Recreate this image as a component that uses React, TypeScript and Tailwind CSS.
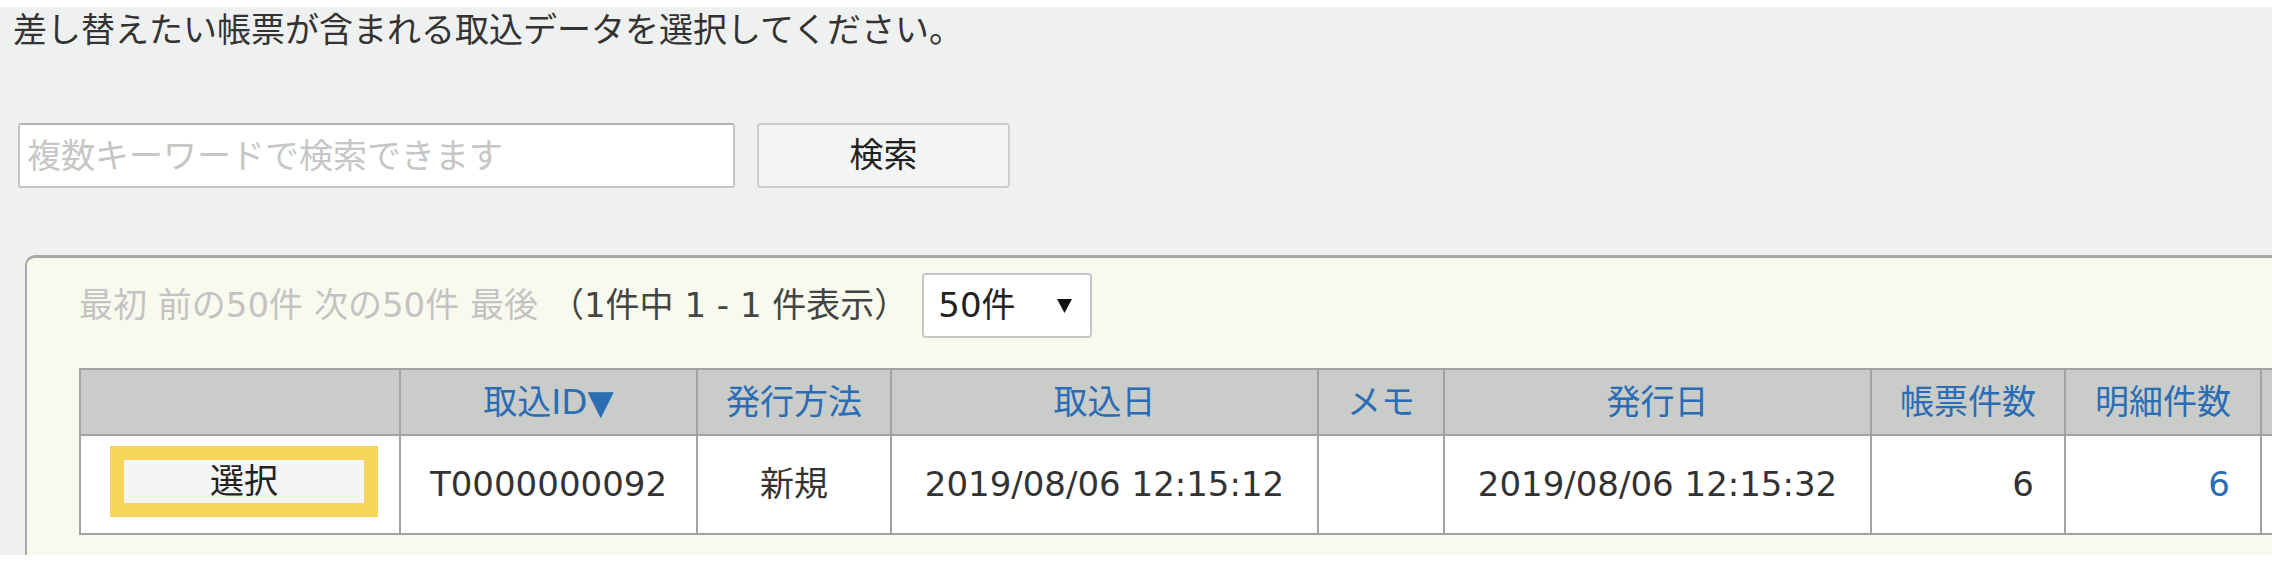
const font = { fontFamily: '"DejaVu Sans", "Noto Sans CJK JP", sans-serif' };

const headers = ['', '取込ID▼', '発行方法', '取込日', 'メモ', '発行日', '帳票件数', '明細件数', ''];

function SelectButton() {
  return (
    <div className="border-[14px] border-[#f7d45a] -mt-[6px] ml-[8px]">
      <div className="w-[240px] h-[43px] bg-[#f4f6f6] flex items-center justify-center text-[#222]">選択</div>
    </div>
  );
}

export default function App() {
  return (
    <div className="w-screen h-[567px] bg-white overflow-hidden text-[34px]" style={font}>
      <div className="mt-[7px] h-[548px] bg-[#eff1f0] overflow-hidden">
        <h1 className="pl-[13px] h-[46px] leading-[46px] text-[34px] font-normal text-[#333] whitespace-nowrap">
          差し替えたい帳票が含まれる取込データを選択してください。
        </h1>

        <div className="mt-[70px] ml-[18px] flex gap-[22px]">
          <input
            className="w-[717px] h-[65px] bg-white border-2 border-[#c4c4c4] border-t-[#b3b3b3] rounded-[3px] px-[7px] text-[34px] text-[#333] placeholder:text-[#c6c6c6] outline-none"
            placeholder="複数キーワードで検索できます"
          />
          <button className="w-[253px] h-[65px] bg-[#f3f4f4] border-2 border-[#cdcdcd] rounded-[4px] text-[#222] text-[34px]">
            検索
          </button>
        </div>

        <div className="mt-[67px] ml-[25px] w-[2400px] h-[400px] bg-[#f9faee] border-t-[3px] border-l-2 border-[#a9a9a9] rounded-tl-[10px] pl-[52px] pt-[15px]">
          <div className="flex items-center h-[65px] whitespace-nowrap">
            <span className="text-[#c3c3c3]">最初 前の50件 次の50件 最後</span>
            <span className="ml-[12px] text-[#444]">（1件中 1 - 1 件表示）</span>
            <div className="ml-[14px] w-[170px] h-[65px] bg-white border-2 border-[#c6c6c6] rounded-[4px] flex items-center pl-[14px] pr-[18px] text-[#222]">
              <span>50件</span>
              <svg className="ml-auto" width="15" height="14" viewBox="0 0 15 14">
                <polygon points="0,0 15,0 7.5,14" fill="#111" />
              </svg>
            </div>
          </div>

          <div className="mt-[30px] inline-grid grid-cols-[318px_295px_192px_425px_124px_425px_192px_194px_200px] grid-rows-[64px_97px] gap-[2px] bg-[#a3a3a3] border-2 border-[#a3a3a3]">
            {headers.map((h, i) => (
              <div key={i} className="bg-[#c9ccc8] flex items-center justify-center text-[#2a6db5] whitespace-nowrap">
                {h}
              </div>
            ))}
            <div className="bg-white flex items-center justify-center">
              <SelectButton />
            </div>
            <div className="bg-white flex items-center justify-center text-[#333]">T0000000092</div>
            <div className="bg-white flex items-center justify-center text-[#333]">新規</div>
            <div className="bg-white flex items-center justify-center text-[#333] whitespace-nowrap">2019/08/06 12:15:12</div>
            <div className="bg-white" />
            <div className="bg-white flex items-center justify-center text-[#333] whitespace-nowrap">2019/08/06 12:15:32</div>
            <div className="bg-white flex items-center justify-end pr-[30px] text-[#333]">6</div>
            <div className="bg-white flex items-center justify-end pr-[30px] text-[#2a6db5]">6</div>
            <div className="bg-white" />
          </div>
        </div>
      </div>
    </div>
  );
}
